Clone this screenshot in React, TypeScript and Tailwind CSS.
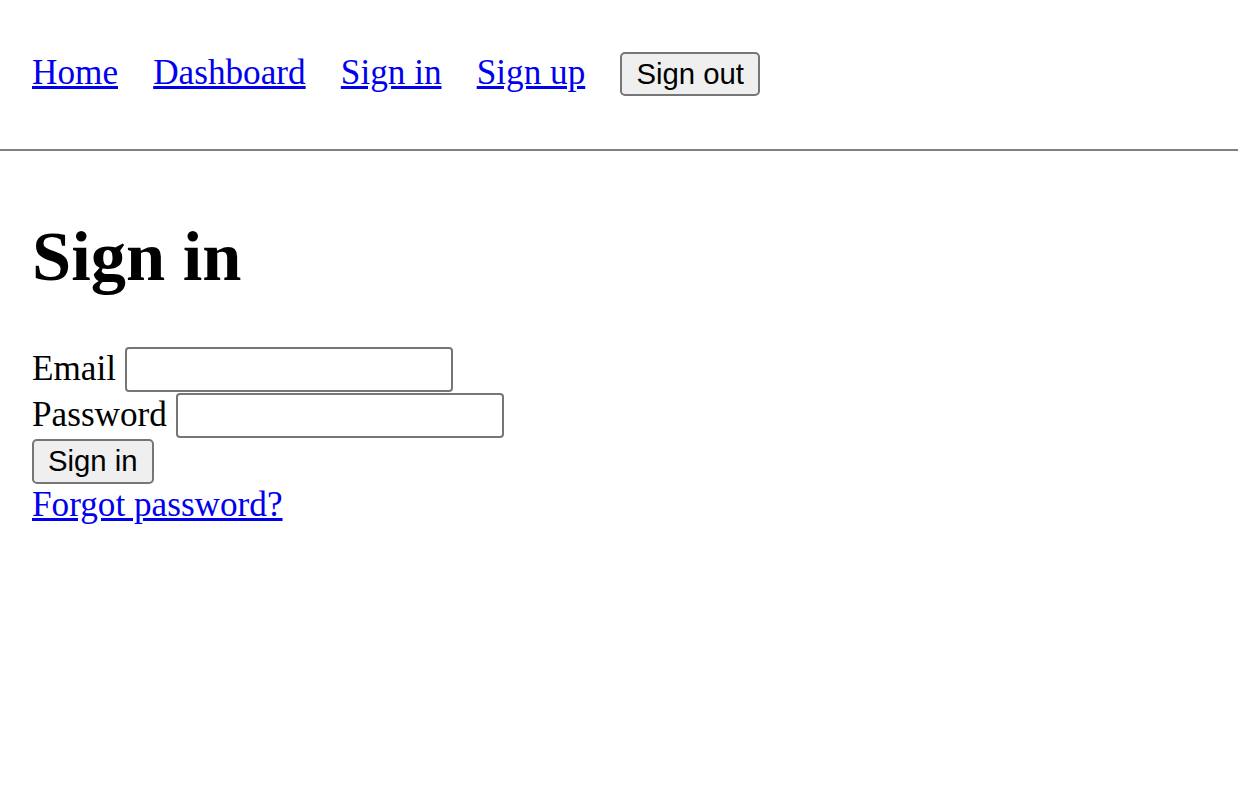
const navLinks = ["Home", "Dashboard", "Sign in", "Sign up"];

export default function App() {
  return (
    <div className="min-h-screen bg-white font-['Times_New_Roman','Liberation_Serif',serif] text-[35.2px] text-black">
      <nav className="flex h-[149px] items-baseline gap-[35.2px] px-[32px] pt-[52px]">
        {navLinks.map((item) => (
          <a key={item} href="#" className="leading-none text-[#0000ee] underline">
            {item}
          </a>
        ))}
        <button className="h-[44px] rounded-[5px] border-2 border-[#767676] bg-[#efefef] px-[14px] font-['Liberation_Sans',Arial,sans-serif] text-[29.3px] leading-none">
          Sign out
        </button>
      </nav>
      <hr className="border-0 border-t-2 border-[#808080]" />

      <main className="px-[32px]">
        <h1 className="mt-[70px] text-[70.4px] font-bold leading-none">Sign in</h1>

        <form className="mt-[54.6px]" onSubmit={(e) => e.preventDefault()}>
          <div className="flex h-[46px] items-center">
            <label className="leading-none">Email</label>
            <input
              type="email"
              className="ml-[9px] h-[45px] w-[328px] rounded-[4px] border-2 border-[#767676] bg-white"
            />
          </div>
          <div className="flex h-[46px] items-center">
            <label className="leading-none">Password</label>
            <input
              type="password"
              className="ml-[9px] h-[45px] w-[328px] rounded-[4px] border-2 border-[#767676] bg-white"
            />
          </div>
          <div className="flex h-[46px] items-center">
            <button className="h-[45px] rounded-[5px] border-2 border-[#767676] bg-[#efefef] px-[14px] font-['Liberation_Sans',Arial,sans-serif] text-[29.3px] leading-none">
              Sign in
            </button>
          </div>
          <div className="leading-[42px]">
            <a href="#" className="text-[#0000ee] underline">
              Forgot password?
            </a>
          </div>
        </form>
      </main>
    </div>
  );
}
